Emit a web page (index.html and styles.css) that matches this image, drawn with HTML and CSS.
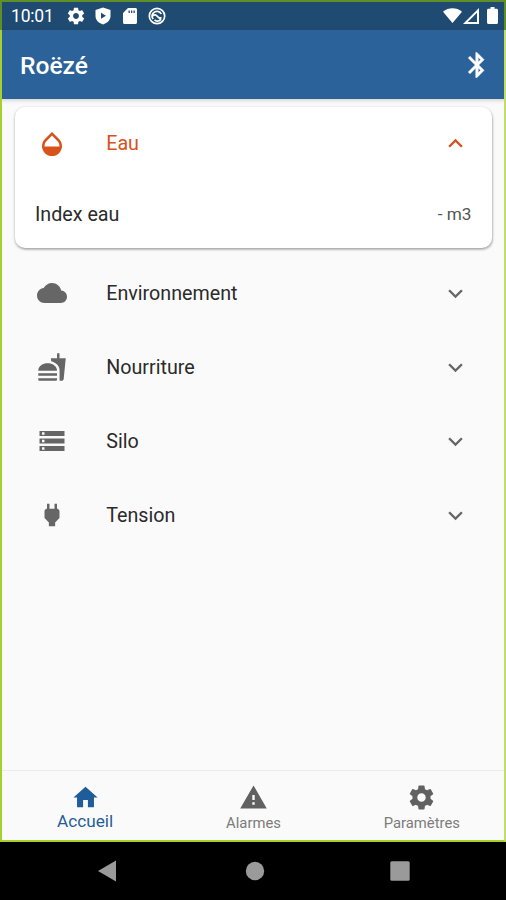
FILE: index.html
```
<!DOCTYPE html>
<html lang="fr">
<head>
<meta charset="utf-8">
<title>Roëzé</title>
<link rel="stylesheet" href="styles.css">
</head>
<body>
<svg class="defs" aria-hidden="true">
  <symbol id="gear" viewBox="0 0 24 24"><path d="M19.43 12.98c.04-.32.07-.64.07-.98s-.03-.66-.07-.98l2.11-1.65c.19-.15.24-.42.12-.64l-2-3.46c-.12-.22-.39-.3-.61-.22l-2.49 1c-.52-.4-1.08-.73-1.69-.98l-.38-2.65C14.46 2.18 14.25 2 14 2h-4c-.25 0-.46.18-.49.42l-.38 2.65c-.61.25-1.17.59-1.69.98l-2.49-1c-.23-.09-.49 0-.61.22l-2 3.46c-.13.22-.07.49.12.64l2.11 1.65c-.04.32-.07.65-.07.98s.03.66.07.98l-2.11 1.65c-.19.15-.24.42-.12.64l2 3.46c.12.22.39.3.61.22l2.49-1c.52.4 1.08.73 1.69.98l.38 2.65c.03.24.24.42.49.42h4c.25 0 .46-.18.49-.42l.38-2.65c.61-.25 1.17-.59 1.69-.98l2.49 1c.23.09.49 0 .61-.22l2-3.46c.12-.22.07-.49-.12-.64l-2.11-1.65zM12 15.500c-1.930 0-3.500-1.570-3.500-3.500s1.570-3.500 3.500-3.500 3.500 1.570 3.500 3.500-1.570 3.500-3.500 3.500z"/></symbol>
  <symbol id="down" viewBox="0 0 24 24"><path d="M16.590 8.590L12 13.170 7.410 8.590 6 10l6 6 6-6z"/></symbol>
</svg>
<div class="phone">
  <header class="status">
    <span class="clock">10:01</span>
    <svg class="s-gear"><use href="#gear"/></svg>
    <svg class="s-shield" viewBox="0 0 16 18"><path fill-rule="evenodd" d="M8 .5L15.500 3v6c0 4-3 7-7.500 8.500C3.500 16 .5 13 .5 9V3zM6 5.800v6l5-3z"/></svg>
    <svg class="s-card" viewBox="0 0 14 16"><path fill-rule="evenodd" d="M5 0h7.500c.8 0 1.500.7 1.500 1.500v13c0 .8-.7 1.500-1.500 1.500h-11C.7 16 0 15.300 0 14.500V5zM5.500 2.500v2.500h1.300v-2.500zM8 2.500v2.500h1.300v-2.500zM10.500 2.500v2.500h1.300v-2.500z"/></svg>
    <svg class="s-sync" viewBox="0 0 18 18"><g fill="none" stroke="#fff"><circle cx="9" cy="9" r="7.700" stroke-width="1.700"/><path stroke-width="1.700" d="M5.200 12A4.800 4.800 0 0 1 5.500 5.800a4.800 4.800 0 0 1 7.800 1.200M4.800 9c1.500-2 3.500-1.200 4.700.5s2.500 1.800 4 1M6.500 13a5 5 0 0 0 6.500-.5M9.500 9.500l3.500 3.500"/></g></svg>
    <span class="spacer"></span>
    <svg class="s-wifi" viewBox="0 0 19 15"><path d="M9.500 15L0 3.800C5.500-.8 13.500-.8 19 3.800z"/></svg>
    <svg class="s-cell" viewBox="0 0 16 16"><path fill-rule="evenodd" d="M16 0v16H0zM14 4.800L4.700 14H14z"/></svg>
    <svg class="s-batt" viewBox="0 0 11 17"><path d="M3.500 0h4v1.700h2c.8 0 1.500.6 1.500 1.400v12.400c0 .8-.7 1.500-1.500 1.500h-8C.7 17 0 16.300 0 15.500V3.100c0-.8.700-1.400 1.500-1.400h2z"/></svg>
  </header>
  <div class="appbar">
    <h1>Roëzé</h1>
    <svg class="icon bt" viewBox="0 0 24 24"><path d="M17.710 7.710L12 2h-1v7.590L6.410 5 5 6.410 10.590 12 5 17.590 6.410 19 11 14.410V22h1l5.710-5.710-4.300-4.290 4.300-4.290zM13 5.830l1.880 1.880L13 9.590V5.830zm1.880 10.460L13 18.170v-3.760l1.880 1.880z"/></svg>
  </div>
  <main>
    <section class="card">
      <div class="row active">
        <svg class="icon" viewBox="0 0 24 24"><path d="M17.660 8L12 2.350 6.340 8C4.780 9.560 4 11.640 4 13.640s.78 4.110 2.340 5.670 3.610 2.350 5.660 2.350 4.100-.79 5.660-2.350S20 15.640 20 13.640 19.220 9.560 17.660 8zM6 14c.01-2 .62-3.270 1.760-4.400L12 5.270l4.240 4.380C17.380 10.770 17.990 12 18 14H6z"/></svg>
        <span class="label">Eau</span>
        <svg class="chev up"><use href="#down"/></svg>
      </div>
      <div class="detail"><span>Index eau</span><span class="value">- m3</span></div>
    </section>
    <div class="row">
      <svg class="icon" viewBox="0 0 24 24"><path d="M19.350 10.040C18.670 6.590 15.640 4 12 4 9.110 4 6.600 5.640 5.350 8.040 2.340 8.360 0 10.910 0 14c0 3.310 2.690 6 6 6h13c2.760 0 5-2.240 5-5 0-2.640-2.050-4.780-4.650-4.960z"/></svg>
      <span class="label">Environnement</span>
      <svg class="chev"><use href="#down"/></svg>
    </div>
    <div class="row">
      <svg class="icon" viewBox="0 0 24 24"><path d="M18.060 22.990h1.660c.84 0 1.530-.64 1.630-1.460L23 5.050h-5V1h-1.970v4.050h-4.970l.3 2.340c1.710.47 3.310 1.320 4.270 2.260 1.440 1.420 2.430 2.890 2.430 5.290v8.050zM1 21.990V21h15.030v.99c0 .55-.45 1-1.010 1H2.010c-.56 0-1.010-.45-1.010-1zm15.030-7c0-8-15.030-8-15.030 0h15.030zM1.020 17h15v2h-15z"/></svg>
      <span class="label">Nourriture</span>
      <svg class="chev"><use href="#down"/></svg>
    </div>
    <div class="row">
      <svg class="icon" viewBox="0 0 24 24"><path d="M2 20h20v-4H2v4zm2-3h2v2H4v-2zM2 4v4h20V4H2zm4 3H4V5h2v2zm-4 7h20v-4H2v4zm2-3h2v2H4v-2z"/></svg>
      <span class="label">Silo</span>
      <svg class="chev"><use href="#down"/></svg>
    </div>
    <div class="row">
      <svg class="icon" viewBox="0 0 24 24"><path d="M16.010 7L16 3h-2v4h-4V3H8v4h-.01C7 6.990 6 7.990 6 8.990v5.490L9.500 18v3h5v-3l3.500-3.510v-5.500c0-1-1-2-1.990-1.990z"/></svg>
      <span class="label">Tension</span>
      <svg class="chev"><use href="#down"/></svg>
    </div>
  </main>
  <nav class="tabs">
    <div class="tab on"><svg viewBox="0 0 24 24"><path d="M10 20v-6h4v6h5v-8h3L12 3 2 12h3v8z"/></svg><span>Accueil</span></div>
    <div class="tab"><svg viewBox="0 0 24 24"><path d="M1 21h22L12 2 1 21zm12-3h-2v-2h2v2zm0-4h-2v-4h2v4z"/></svg><span>Alarmes</span></div>
    <div class="tab"><svg><use href="#gear"/></svg><span>Paramètres</span></div>
  </nav>
  <footer class="sysnav">
    <svg viewBox="0 0 20 22"><path d="M19 .5v21L1 11z"/></svg>
    <svg viewBox="0 0 20 22"><circle cx="10" cy="11" r="9.200"/></svg>
    <svg viewBox="0 0 20 22"><rect x=".3" y="1.300" width="19.400" height="19.400" rx="1.500"/></svg>
  </footer>
  <div class="frame"></div>
  <div class="frame-shade"></div>
</div>
</body>
</html>
```
FILE: styles.css
```
body { margin: 0; background: #fafafa; }
.defs { display: none; }
.phone {
  position: relative;
  width: 506px; height: 900px;
  display: flex; flex-direction: column;
  box-sizing: border-box;
  overflow: hidden;
  font-family: Roboto, "Liberation Sans", sans-serif;
  color: #2b2b2b;
  background: #fafafa;
}
svg { display: block; flex: none; fill: currentColor; }
.status {
  height: 30px; flex: none;
  display: flex; align-items: center;
  box-sizing: border-box;
  padding: 1px 8px 0 11px;
  background: #1f4a72; color: #fff;
}
.clock { width: 55px; font-size: 17.500px; line-height: 28px; letter-spacing: -.2px; }
.s-gear { width: 20px; height: 20px; margin-right: 9px; }
.s-shield { width: 16px; height: 18px; margin-right: 12px; }
.s-card { width: 14px; height: 16px; margin-right: 11px; }
.s-sync { width: 18px; height: 18px; }
.spacer { flex: 1; }
.s-wifi { width: 19px; height: 15px; margin-right: 1px; }
.s-cell { width: 16px; height: 16px; margin-right: 8px; }
.s-batt { width: 11px; height: 17px; }
.appbar {
  position: relative;
  height: 69px; flex: none;
  display: flex; align-items: center; justify-content: space-between;
  box-sizing: border-box;
  padding: 3px 14px 0 20px;
  background: #2a6299; color: #fff;
  box-shadow: 0 1px 4px rgba(70, 65, 40, .25);
}
h1 { margin: 0; font-size: 24.600px; font-weight: 500; line-height: 30px; }
.icon { width: 30px; height: 30px; }
.bt { margin-bottom: 3px; stroke: currentColor; stroke-width: .4; }
main { flex: 1; min-height: 0; padding: 8px 14px 0 15px; }
.card {
  height: 141px;
  margin-bottom: 8px;
  border-radius: 10px;
  background: #fff;
  box-shadow: 0 1px 3px rgba(0, 0, 0, .3), 1px 2px 2px rgba(0, 0, 0, .12);
}
.row {
  height: 74px;
  display: flex; align-items: center;
  padding: 0 22.500px 0 22px;
  color: #666;
}
.label { flex: 1; margin-left: 39.200px; padding-top: 2px; font-size: 19.700px; line-height: 24px; color: #2b2b2b; }
.active { height: 73px; }
.active, .active .label { color: #d8521c; }
.active .label { padding-top: 0; }
.chev { width: 29px; height: 29px; }
.up { transform: rotate(180deg); }
.detail {
  height: 68px;
  display: flex; align-items: center; justify-content: space-between;
  padding: 0 20.500px 0 20px;
  font-size: 19.700px;
}
.value { font-size: 17.200px; color: #555; }
.tabs {
  height: 70px; flex: none;
  display: grid; grid-template-columns: repeat(3, 1fr);
  padding-left: 1px;
  border-top: 1px solid #ececec;
}
.tab {
  display: flex; flex-direction: column; align-items: center;
  padding-top: 12px;
  font-size: 14.800px; line-height: 20px;
  color: #7c7c7c;
}
.tab svg { width: 29px; height: 29px; color: #616161; }
.tab span { margin-top: 1px; }
.on { color: #265f98; font-size: 17.200px; }
.on svg { color: #1f5c9a; }
.on span { margin-top: -1px; }
.sysnav {
  height: 59px; flex: none;
  display: grid; grid-template-columns: 148px 146px 145px;
  justify-content: center; justify-items: center; align-items: center;
  background: #000; color: #9a9a9a;
}
.sysnav svg { width: 20px; height: 22px; }
.sysnav svg:first-child { margin-right: 2px; }
.frame {
  position: absolute; inset: 0 0 58px;
  border: 2px solid #a6d02c;
  border-right-color: #c0dd66;
  pointer-events: none;
}
.frame-shade {
  position: absolute; inset: 0 0 auto;
  height: 28px;
  border: 2px solid #618f27; border-bottom: 0;
  pointer-events: none;
}
```
